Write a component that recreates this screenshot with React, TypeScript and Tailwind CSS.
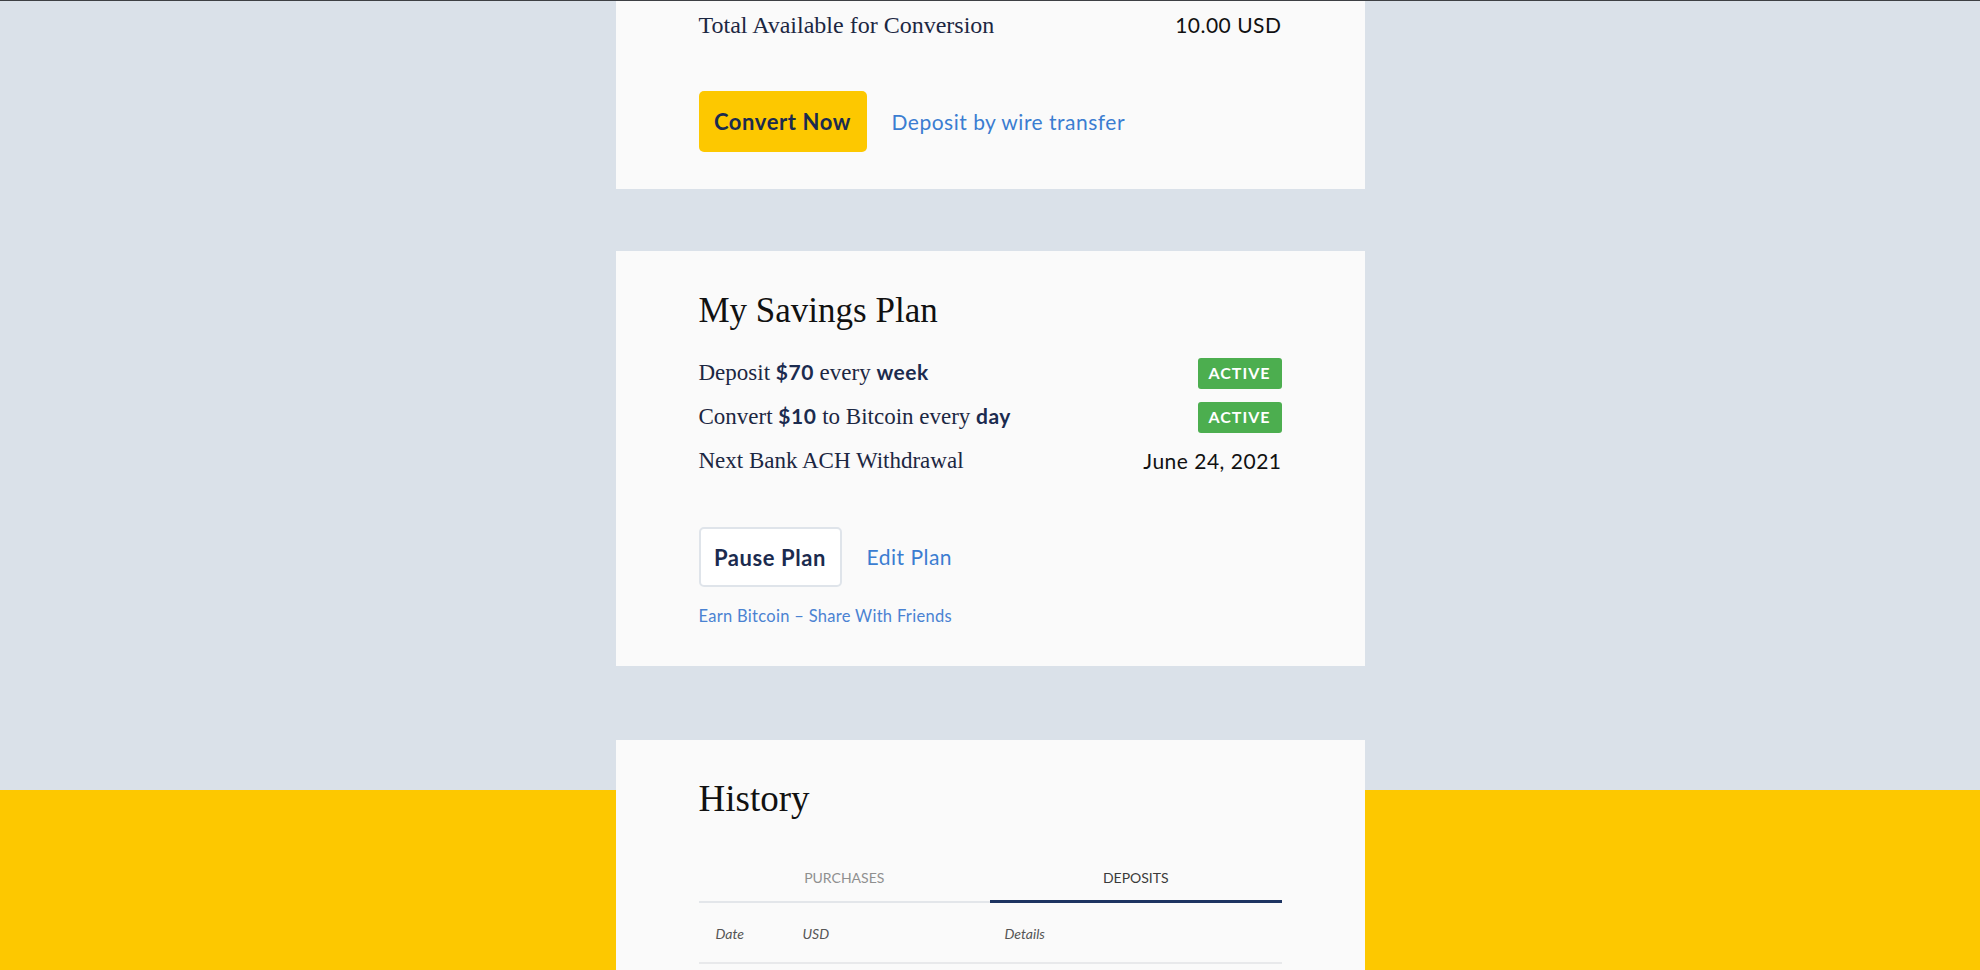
const serif = "font-['Liberation_Serif',serif]";
const sans = "font-['Lato',sans-serif]";

function Badge() {
  return (
    <span
      className={`${sans} flex h-[31px] w-[84px] items-center justify-center rounded-[3px] bg-[#4cae4f] text-[16px] font-bold tracking-[1px] text-white`}
    >
      ACTIVE
    </span>
  );
}

export default function App() {
  return (
    <div className="relative min-h-[970px] w-full overflow-hidden bg-[#dae1e9]">
      {/* yellow band behind the history card */}
      <div className="absolute inset-x-0 top-[790px] bottom-0 bg-[#fdc800]" />
      <div className="relative h-px w-full bg-[#3d4044]" />

      <div className="relative mx-auto flex w-[749px] flex-col">
        {/* Conversion card */}
        <section className="bg-[#fafafa] px-[83px] pt-[9px] pb-[37px]">
          <div className="flex h-[30px] items-center justify-between">
            <span className={`${serif} text-[24px] text-[#1c2742]`}>
              Total Available for Conversion
            </span>
            <span className={`${sans} text-[21px] tracking-[0.5px] text-[#111]`}>10.00 USD</span>
          </div>
          <div className="mt-[51px] flex items-center gap-[25px]">
            <button
              className={`${sans} h-[61px] w-[168px] rounded-[5px] bg-[#fdc800] text-[22px] font-bold tracking-[0.6px] text-[#1b2b4f]`}
            >
              Convert Now
            </button>
            <a className={`${sans} text-[21px] tracking-[0.5px] text-[#3b7dd1]`}>
              Deposit by wire transfer
            </a>
          </div>
        </section>

        {/* Savings plan card */}
        <section className="mt-[62px] bg-[#fafafa] px-[83px] pt-[40px] pb-[40px]">
          <h2 className={`${serif} h-[40px] text-[35px] leading-[40px] text-[#111]`}>
            My Savings Plan
          </h2>
          <div className="mt-[26px] flex flex-col gap-[12px]">
            <div className="flex h-[32px] items-center justify-between">
              <span className={`${serif} text-[23px] text-[#1c2742]`}>
                Deposit{" "}
                <b className={`${sans} text-[21px] font-bold tracking-[0.5px] text-[#1b2b4f]`}>$70</b>{" "}
                every{" "}
                <b className={`${sans} text-[21px] font-bold tracking-[0.5px] text-[#1b2b4f]`}>week</b>
              </span>
              <Badge />
            </div>
            <div className="flex h-[32px] items-center justify-between">
              <span className={`${serif} text-[23px] text-[#1c2742]`}>
                Convert{" "}
                <b className={`${sans} text-[21px] font-bold tracking-[0.5px] text-[#1b2b4f]`}>$10</b>{" "}
                to Bitcoin every{" "}
                <b className={`${sans} text-[21px] font-bold tracking-[0.5px] text-[#1b2b4f]`}>day</b>
              </span>
              <Badge />
            </div>
            <div className="flex h-[32px] items-center justify-between">
              <span className={`${serif} text-[23px] text-[#1c2742]`}>Next Bank ACH Withdrawal</span>
              <span className={`${sans} text-[21px] tracking-[0.5px] text-[#111]`}>June 24, 2021</span>
            </div>
          </div>
          <div className="mt-[50px] flex items-center gap-[25px]">
            <button
              className={`${sans} h-[60px] w-[143px] rounded-[5px] border-2 border-[#dfe4ea] bg-white text-[22px] font-bold tracking-[0.6px] text-[#1b2b4f]`}
            >
              Pause Plan
            </button>
            <a className={`${sans} text-[21px] tracking-[0.5px] text-[#3b7dd1]`}>Edit Plan</a>
          </div>
          <a
            className={`${sans} mt-[19px] block h-[20px] text-[16.5px] leading-[20px] tracking-[0.3px] text-[#4a82d2]`}
          >
            Earn Bitcoin – Share With Friends
          </a>
        </section>

        {/* History card */}
        <section className="mt-[74px] min-h-[300px] bg-[#fafafa] px-[83px] pt-[39px]">
          <h2 className={`${serif} h-[40px] text-[37px] leading-[40px] text-[#111]`}>History</h2>
          <div className="mt-[39px] grid grid-cols-2 items-end">
            <div
              className={`${sans} border-b-2 border-[#e3e6ea] pt-[10px] pb-[13px] text-center text-[14px] leading-[20px] text-[#8f8f8f]`}
            >
              PURCHASES
            </div>
            <div
              className={`${sans} border-b-[3px] border-[#1d3461] pt-[10px] pb-[12px] text-center text-[14px] leading-[20px] text-[#3a3a3a]`}
            >
              DEPOSITS
            </div>
          </div>
          <div
            className={`${sans} flex border-b-2 border-[#e8e9eb] pt-[21px] pb-[18px] text-[14px] leading-[20px] text-[#555] italic`}
          >
            <span className="ml-[17px] w-[87px]">Date</span>
            <span className="w-[202px]">USD</span>
            <span>Details</span>
          </div>
        </section>
      </div>
    </div>
  );
}
